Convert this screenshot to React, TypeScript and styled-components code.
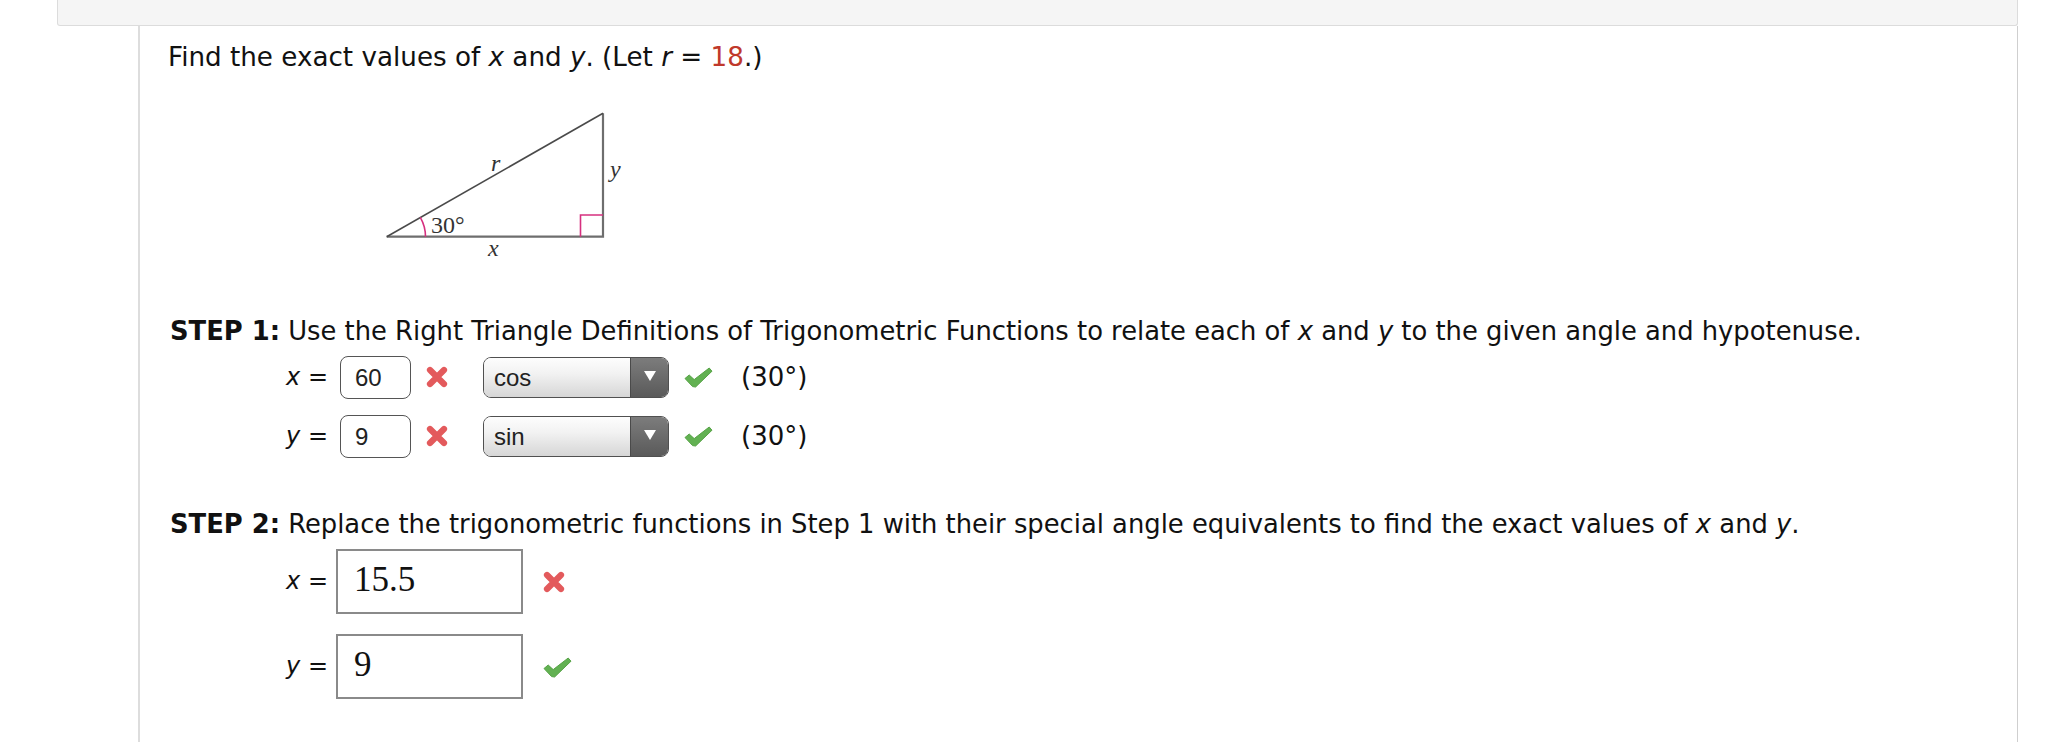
import React from "react";
import styled, { createGlobalStyle } from "styled-components";

const GlobalStyle = createGlobalStyle`
  html, body {
    margin: 0;
    padding: 0;
    background: #ffffff;
  }
  body {
    font-family: "DejaVu Sans", Verdana, sans-serif;
    color: #111111;
  }
`;

const Page = styled.div`
  padding-left: 57px;
  width: 1961px;
`;

const TopBar = styled.div`
  height: 25px;
  background: #f5f5f5;
  border: 1px solid #dcdcdc;
  border-top: none;
  border-radius: 0 0 3px 3px;
`;

const Panel = styled.div`
  margin-left: 81px;
  min-height: 716px;
  box-sizing: border-box;
  border-left: 2px solid #dddddd;
  border-right: 1px solid #cfcfcf;
  padding: 12px 0 0 28px;
  font-size: 26px;
  line-height: 39px;
`;

const Prompt = styled.div`
  font-size: 26.2px;
`;

const Var = styled.i`
  font-style: italic;
`;

const Given = styled.span`
  color: #c0392b;
`;

const Figure = styled.svg`
  display: block;
  margin: 28px 0 0 212px;
`;

const StepHeading = styled.div`
  margin: 47px 0 0 2px;
  font-size: 25.8px;
  white-space: nowrap;

  b {
    font-weight: bold;
  }
`;

const Rows = styled.div<{ $gap: number; $top: number }>`
  display: flex;
  flex-direction: column;
  gap: ${(p) => p.$gap}px;
  margin: ${(p) => p.$top}px 0 0 118px;
`;

const Row = styled.div<{ $height: number }>`
  display: flex;
  align-items: center;
  height: ${(p) => p.$height}px;
`;

const Label = styled.div<{ $gap: number }>`
  width: 42px;
  margin-right: ${(p) => p.$gap}px;
  display: flex;
  justify-content: flex-end;
  font-size: 24px;
  white-space: nowrap;
`;

const SmallBox = styled.div`
  box-sizing: border-box;
  width: 71px;
  height: 43px;
  border: 1.5px solid #555555;
  border-radius: 8px;
  background: #ffffff;
  display: flex;
  align-items: center;
  padding-left: 14px;
  font-family: "Liberation Sans", Arial, sans-serif;
  font-size: 24px;
  color: #222222;
`;

const BigBox = styled.div`
  box-sizing: border-box;
  width: 187px;
  height: 65px;
  border: 2px solid #8a8a8a;
  background: #ffffff;
  padding: 4px 0 0 16px;
  font-family: "Liberation Serif", "Times New Roman", serif;
  font-size: 35px;
  line-height: 50px;
  color: #111111;
`;

const Mark = styled.span<{ $left: number }>`
  display: flex;
  align-items: center;
  margin-left: ${(p) => p.$left}px;
`;

const Select = styled.div`
  box-sizing: border-box;
  width: 186px;
  height: 41px;
  margin-left: 34px;
  border: 1.5px solid #505050;
  border-radius: 8px;
  overflow: hidden;
  display: flex;
`;

const SelectValue = styled.div`
  flex: 1;
  display: flex;
  align-items: center;
  padding-left: 10px;
  background: linear-gradient(#fdfdfd, #f2f2f2 40%, #d6d6d6);
  font-family: "Liberation Sans", Arial, sans-serif;
  font-size: 24px;
  color: #222222;
`;

const SelectArrow = styled.div`
  width: 37px;
  display: flex;
  align-items: center;
  justify-content: center;
  border-left: 1px solid #4a4a4a;
  background: linear-gradient(#7c7c7c, #5a5a5a);

  &::after {
    content: "";
    margin-top: -3px;
    border-left: 6px solid transparent;
    border-right: 6px solid transparent;
    border-top: 10px solid #ffffff;
  }
`;

const Angle = styled.span`
  margin-left: 28px;
`;

const WrongIcon = () => (
  <svg width="24" height="24" viewBox="0 0 24 24">
    <path
      d="M5 5 L19 19 M19 5 L5 19"
      stroke="#e35a5c"
      strokeWidth="6.2"
      strokeLinecap="round"
      fill="none"
    />
  </svg>
);

const RightIcon = () => (
  <svg width="30" height="24" viewBox="0 0 30 24">
    <path
      d="M2 13.5 L6.2 10 L11.2 14.6 L26.2 3 L29 6.2 L12.6 22 L9.6 21.6 Z"
      fill="#62b152"
      stroke="#56a346"
      strokeWidth="1"
      strokeLinejoin="round"
    />
  </svg>
);

const Triangle = () => (
  <Figure width="260" height="160" viewBox="0 0 260 160">
    <path d="M6.7 131.7 L223 131.7 L223 8.3" stroke="#6e6e6e" strokeWidth="2.2" fill="none" />
    <path d="M6.7 131.7 L223 8.3" stroke="#4a4a4a" strokeWidth="1.6" fill="none" />
    <path d="M200.5 131.7 L200.5 110 L223 110" stroke="#d6307f" strokeWidth="1.6" fill="none" />
    <path d="M45.5 131.7 A38.8 38.8 0 0 0 40.3 112.3" stroke="#d6307f" strokeWidth="1.6" fill="none" />
    <text x="51" y="128" fontFamily="Liberation Serif, serif" fontSize="24" fill="#333">
      30°
    </text>
    <text x="111" y="66" fontFamily="Liberation Serif, serif" fontStyle="italic" fontSize="24" fill="#333">
      r
    </text>
    <text x="230" y="72" fontFamily="Liberation Serif, serif" fontStyle="italic" fontSize="24" fill="#333">
      y
    </text>
    <text x="108" y="151" fontFamily="Liberation Serif, serif" fontStyle="italic" fontSize="24" fill="#333">
      x
    </text>
  </Figure>
);

type FunctionRow = {
  name: string;
  value: string;
  fn: string;
};

const stepOneRows: FunctionRow[] = [
  { name: "x", value: "60", fn: "cos" },
  { name: "y", value: "9", fn: "sin" },
];

const stepTwoRows = [
  { name: "x", value: "15.5", correct: false },
  { name: "y", value: "9", correct: true },
];

const App: React.FC = () => (
  <>
    <GlobalStyle />
    <Page>
      <TopBar />
      <Panel>
        <Prompt>
          Find the exact values of <Var>x</Var> and <Var>y</Var>. (Let <Var>r</Var> ={" "}
          <Given>18</Given>.)
        </Prompt>
        <Triangle />

        <StepHeading>
          <b>STEP 1:</b> Use the Right Triangle Definitions of Trigonometric Functions to relate
          each of <Var>x</Var> and <Var>y</Var> to the given angle and hypotenuse.
        </StepHeading>
        <Rows $gap={15} $top={4}>
          {stepOneRows.map((row) => (
            <Row key={row.name} $height={44}>
              <Label $gap={12}>
                <Var>{row.name}</Var>&nbsp;=
              </Label>
              <SmallBox>{row.value}</SmallBox>
              <Mark $left={14}>
                <WrongIcon />
              </Mark>
              <Select>
                <SelectValue>{row.fn}</SelectValue>
                <SelectArrow />
              </Select>
              <Mark $left={14}>
                <RightIcon />
              </Mark>
              <Angle>(30°)</Angle>
            </Row>
          ))}
        </Rows>

        <StepHeading>
          <b>STEP 2:</b> Replace the trigonometric functions in Step 1 with their special angle
          equivalents to find the exact values of <Var>x</Var> and <Var>y</Var>.
        </StepHeading>
        <Rows $gap={20} $top={5}>
          {stepTwoRows.map((row) => (
            <Row key={row.name} $height={65}>
              <Label $gap={8}>
                <Var>{row.name}</Var>&nbsp;=
              </Label>
              <BigBox>{row.value}</BigBox>
              <Mark $left={19}>{row.correct ? <RightIcon /> : <WrongIcon />}</Mark>
            </Row>
          ))}
        </Rows>
      </Panel>
    </Page>
  </>
);

export default App;
